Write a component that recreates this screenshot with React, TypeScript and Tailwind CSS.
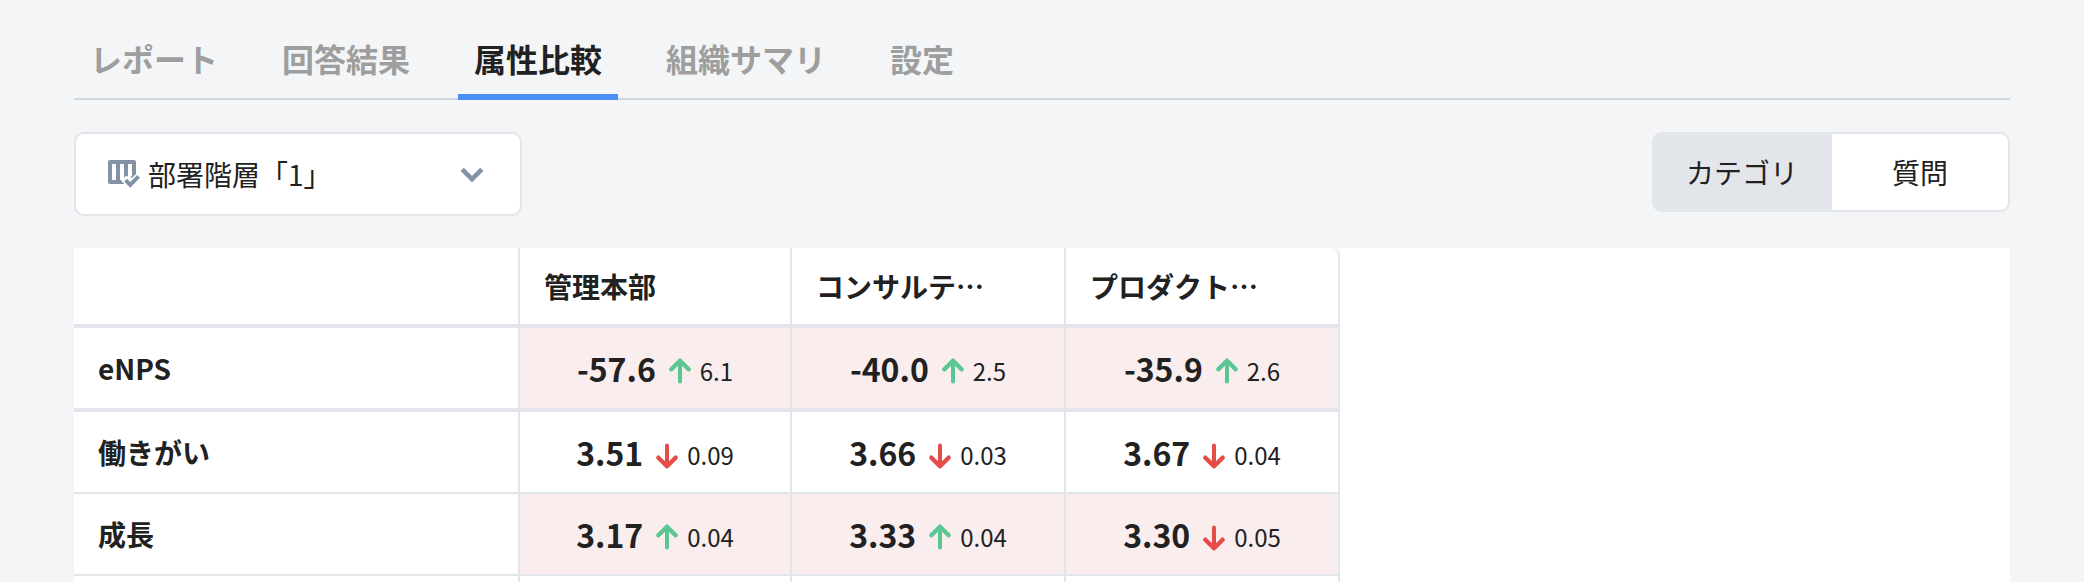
type Trend = 'up' | 'down';

type Cell = { value: string; trend: Trend; diff: string; low: boolean };

type Row = { label: string; cells: Cell[]; border: string };

const tabs = ['レポート', '回答結果', '属性比較', '組織サマリ', '設定'];
const activeTab = '属性比較';

const columns = ['管理本部', 'コンサルテ…', 'プロダクト…'];

const rows: Row[] = [
  {
    label: 'eNPS',
    border: 'border-b-4',
    cells: [
      { value: '-57.6', trend: 'up', diff: '6.1', low: true },
      { value: '-40.0', trend: 'up', diff: '2.5', low: true },
      { value: '-35.9', trend: 'up', diff: '2.6', low: true },
    ],
  },
  {
    label: '働きがい',
    border: 'border-b-2',
    cells: [
      { value: '3.51', trend: 'down', diff: '0.09', low: false },
      { value: '3.66', trend: 'down', diff: '0.03', low: false },
      { value: '3.67', trend: 'down', diff: '0.04', low: false },
    ],
  },
  {
    label: '成長',
    border: 'border-b-2',
    cells: [
      { value: '3.17', trend: 'up', diff: '0.04', low: true },
      { value: '3.33', trend: 'up', diff: '0.04', low: true },
      { value: '3.30', trend: 'down', diff: '0.05', low: true },
    ],
  },
];

const gridColumns = 'grid grid-cols-[446px_272px_274px_274px] w-[1266px]';

function TrendArrow({ trend }: { trend: Trend }) {
  return (
    <svg
      width="22"
      height="26"
      viewBox="0 0 22 26"
      fill="none"
      strokeWidth="4.4"
      strokeLinecap="round"
      className={trend === 'up' ? 'stroke-[#5bc692]' : 'rotate-180 stroke-[#e64c47]'}
    >
      <path d="M11 4V23.6" strokeWidth="4" />
      <path d="M2.4 11.3L11 2.7L19.6 11.3" strokeLinejoin="round" />
    </svg>
  );
}

function ColumnCheckIcon() {
  return (
    <svg className="mt-0.5" width="34" height="30" viewBox="0 0 34 30" fill="none">
      <path
        fillRule="evenodd"
        fill="#8492a6"
        d="M2 0H26Q28 0 28 2V15L24 18L20 16V4H24V4H20V16L15.5 19.5L16 24H2Q0 24 0 22V2Q0 0 2 0ZM4 4V20H8V4ZM12 4V20H16V4Z"
      />
      <path d="M20 4H24V16L20 18Z" fill="#fff" />
      <path d="M15.6 18.2L22.2 24.8L32 15" stroke="#fff" strokeWidth="7" />
      <path d="M17.6 20.2L22.2 24.8L30.6 16.4" stroke="#8492a6" strokeWidth="4" />
    </svg>
  );
}

function Tabs() {
  return (
    <nav className="flex h-[100px] gap-8 border-b-2 border-[#d0d7de]">
      {tabs.map((tab) => (
        <a
          key={tab}
          className={
            tab === activeTab
              ? '-mb-0.5 flex h-[100px] items-center border-b-6 border-[#4a90f8] px-4 pt-[21px] text-[#212121]'
              : '-mb-0.5 flex h-[100px] items-center border-b-6 border-transparent px-4 pt-[21px] text-[#9e9e9e]'
          }
        >
          <span className="text-[32px] leading-10 font-bold">{tab}</span>
        </a>
      ))}
    </nav>
  );
}

function Toolbar() {
  return (
    <div className="mt-8 flex h-[84px] items-start justify-between text-[28px] leading-10 text-[#212121]">
      <button className="flex h-[84px] w-[448px] items-center rounded-[10px] border-2 border-[#e2e5ea] bg-white pr-9 pl-8">
        <ColumnCheckIcon />
        <span className="ml-1.5">部署階層「1」</span>
        <svg className="ml-auto" width="24" height="16" viewBox="0 0 24 16" fill="none">
          <path d="M2.2 3.4L12 13.2L21.8 3.4" stroke="#8492a6" strokeWidth="4.5" />
        </svg>
      </button>
      <div className="flex h-20 w-[358px] overflow-hidden rounded-[10px] border-2 border-[#e2e5ea] bg-white">
        <button className="h-full w-[178px] bg-[#e2e5ea] pr-0.5">カテゴリ</button>
        <button className="h-full flex-1">質問</button>
      </div>
    </div>
  );
}

function ComparisonTable() {
  return (
    <div className="mt-8 h-[334px] overflow-hidden bg-white text-[#212121]">
      <div className={gridColumns}>
        <div className="h-20 border-r-2 border-b-4 border-[#e2e5ea]" />
        {columns.map((name) => (
          <div
            key={name}
            className="flex h-20 items-center border-r-2 border-b-4 border-[#e2e5ea] pl-6 text-[28px] leading-10 font-bold last:rounded-tr-lg"
          >
            {name}
          </div>
        ))}
      </div>
      {rows.map((row) => (
        <div key={row.label} className={gridColumns}>
          <div
            className={`flex items-center border-r-2 border-[#e2e5ea] pl-6 text-[28px] leading-20 font-bold ${row.border}`}
          >
            {row.label}
          </div>
          {row.cells.map((cell, i) => (
            <div
              key={i}
              className={`flex h-full items-center justify-center border-r-2 border-[#e2e5ea] ${row.border} ${
                cell.low ? 'bg-[#f9eded]' : 'bg-white'
              }`}
            >
              <span className="text-[32px] leading-20 font-bold">{cell.value}</span>
              <span className={cell.trend === 'up' ? 'ml-[13px] pt-1.5' : 'ml-[13px] pt-2'}>
                <TrendArrow trend={cell.trend} />
              </span>
              <span className="ml-[9px] pt-1.5 text-2xl">{cell.diff}</span>
            </div>
          ))}
        </div>
      ))}
      <div className={gridColumns}>
        {[0, 1, 2, 3].map((i) => (
          <div key={i} className="h-20 border-r-2 border-[#e2e5ea]" />
        ))}
      </div>
    </div>
  );
}

export default function App() {
  return (
    <div
      lang="ja"
      className="h-[582px] w-[2084px] overflow-hidden bg-[#f3f5f7] pr-[74px] pl-[74px] font-['Noto_Sans_CJK_JP',sans-serif]"
    >
      <Tabs />
      <Toolbar />
      <ComparisonTable />
    </div>
  );
}
